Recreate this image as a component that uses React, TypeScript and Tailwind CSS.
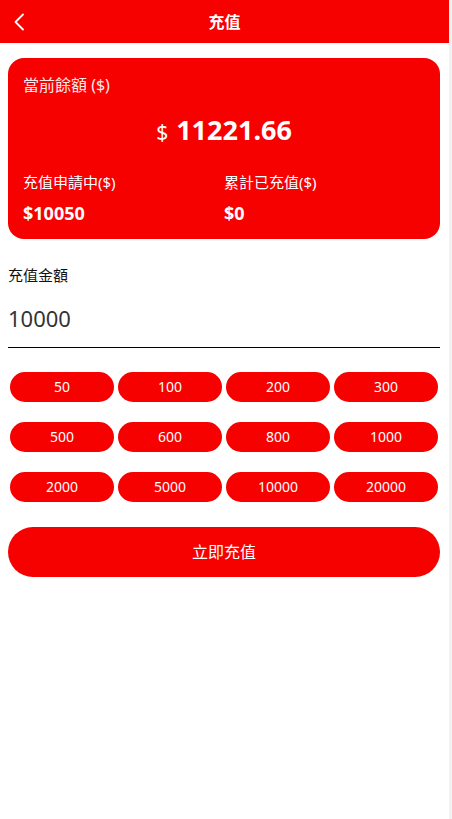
import { useState } from "react";

const AMOUNTS = [50, 100, 200, 300, 500, 600, 800, 1000, 2000, 5000, 10000, 20000];

function ChevronLeft() {
  return (
    <svg width="12" height="18" viewBox="0 0 12 18" fill="none">
      <path d="M10 1.5L2.5 9L10 16.5" stroke="white" strokeWidth="1.8" strokeLinecap="round" strokeLinejoin="round" />
    </svg>
  );
}

export default function App() {
  const [amount, setAmount] = useState("10000");

  return (
    <div
      className="min-h-[819px] bg-[#f2f2f2]"
      style={{ fontFamily: '"Noto Sans", "Noto Sans CJK TC", sans-serif' }}
    >
      <div className="w-[449px] min-h-[819px] bg-white">
        {/* header */}
        <div className="relative h-[43px] bg-[#f60000] flex items-center justify-center">
          <button className="absolute left-[11px] top-[11px] p-0.5">
            <ChevronLeft />
          </button>
          <h1 className="text-white text-[16px] font-bold">充值</h1>
        </div>

        <div className="pl-2 pr-[9px] pt-[15px]">
          {/* balance card */}
          <div className="bg-[#f60000] rounded-[16px] px-[15px] pt-[16px] pb-[14px] text-white">
            <div className="text-[16px] text-[#ffe8e8] leading-[22px]">當前餘額 ($)</div>
            <div className="flex items-baseline justify-center gap-2 mt-[18px]">
              <span className="text-[21px]">$</span>
              <span className="text-[27px] font-bold leading-[32px]">11221.66</span>
            </div>
            <div className="grid grid-cols-2 mt-[22px]">
              <div>
                <div className="text-[15px] leading-[22px]">充值申請中($)</div>
                <div className="text-[18px] font-bold mt-[8px] leading-[24px]">$10050</div>
              </div>
              <div>
                <div className="text-[15px] leading-[22px]">累計已充值($)</div>
                <div className="text-[18px] font-bold mt-[8px] leading-[24px]">$0</div>
              </div>
            </div>
          </div>

          {/* amount input */}
          <div className="mt-[25px] text-[15px] text-[#111] leading-[22px]">充值金額</div>
          <div className="border-b border-black mt-[16px] pb-[13px]">
            <input
              value={amount}
              onChange={(e) => setAmount(e.target.value)}
              className="w-full text-[22px] text-[#333] leading-[32px] outline-none bg-transparent"
            />
          </div>

          {/* quick amounts */}
          <div className="grid grid-cols-4 gap-y-[20px] mt-[24px]">
            {AMOUNTS.map((a) => (
              <div key={a} className="px-[2px]">
                <button
                  onClick={() => setAmount(String(a))}
                  className="w-full h-[30px] rounded-full bg-[#f60000] text-white text-[14px]"
                >
                  {a}
                </button>
              </div>
            ))}
          </div>

          <button className="w-full h-[50px] mt-[25px] rounded-full bg-[#f60000] text-white text-[16px]">
            立即充值
          </button>
        </div>
      </div>
    </div>
  );
}
